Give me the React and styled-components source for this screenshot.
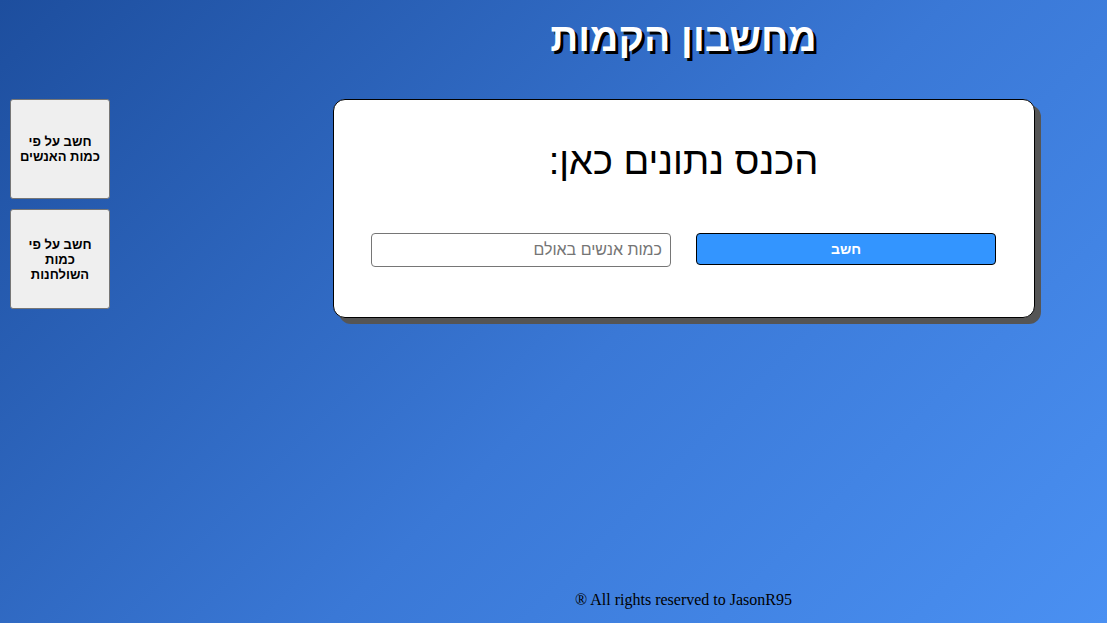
import React from 'react';
import styled, { createGlobalStyle } from 'styled-components';

const GlobalStyle = createGlobalStyle`
  html, body {
    margin: 0;
    padding: 0;
  }
  body {
    min-height: 100vh;
    background: linear-gradient(135deg, #1d4e9e 0%, #3a78d6 55%, #4a90f2 100%);
    font-family: "Liberation Sans", Arial, sans-serif;
  }
`;

const Page = styled.div`
  display: grid;
  grid-template-columns: 260px 1fr;
  min-height: 100vh;
`;

const Sidebar = styled.aside`
  display: flex;
  flex-direction: column;
  gap: 10px;
  padding: 99px 0 0 10px;
`;

const SideButton = styled.button`
  width: 100px;
  height: 100px;
  background: #efefef;
  border: 1px solid #767676;
  border-radius: 3px;
  font-family: "Liberation Sans", Arial, sans-serif;
  font-size: 13px;
  font-weight: bold;
  color: #000;
  direction: rtl;
  padding: 1px 6px;
  cursor: pointer;
`;

const Main = styled.main`
  display: flex;
  flex-direction: column;
  align-items: center;
`;

const Title = styled.h1`
  margin: 16px 0 0;
  height: 83px;
  font-size: 39px;
  font-weight: bold;
  color: #fff;
  text-shadow: 3px 3px 0 #000;
  direction: rtl;
`;

const Card = styled.section`
  width: 700px;
  box-sizing: content-box;
  background: #fff;
  border: 1px solid #000;
  border-radius: 12px;
  box-shadow: 6px 6px 0 #555;
  padding: 0 0 50px;
  display: flex;
  flex-direction: column;
  align-items: center;
`;

const CardTitle = styled.h2`
  margin: 40px 0 50px;
  font-size: 38px;
  font-weight: normal;
  direction: rtl;
  color: #000;
`;

const Row = styled.div`
  display: flex;
  direction: rtl;
  align-items: flex-start;
  gap: 25px;
`;

const SubmitButton = styled.button`
  width: 300px;
  height: 32px;
  background: #3395ff;
  color: #fff;
  border: 1px solid #000;
  border-radius: 4px;
  font-family: "Liberation Sans", Arial, sans-serif;
  font-size: 14px;
  font-weight: bold;
  cursor: pointer;
`;

const Field = styled.input`
  width: 300px;
  height: 34px;
  box-sizing: border-box;
  border: 1px solid #767676;
  border-radius: 4px;
  padding: 0 8px;
  font-family: "Liberation Sans", Arial, sans-serif;
  font-size: 16px;
  direction: rtl;
  &::placeholder {
    color: #757575;
  }
`;

const Footer = styled.footer`
  margin-top: auto;
  padding-bottom: 14px;
  font-family: "Liberation Serif", "Times New Roman", serif;
  font-size: 16px;
  color: #000;
`;

export default function App() {
  return (
    <>
      <GlobalStyle />
      <Page>
        <Sidebar>
          <SideButton>חשב על פי כמות האנשים</SideButton>
          <SideButton>חשב על פי כמות השולחנות</SideButton>
        </Sidebar>
        <Main>
          <Title>מחשבון הקמות</Title>
          <Card>
            <CardTitle>הכנס נתונים כאן:</CardTitle>
            <Row>
              <SubmitButton>חשב</SubmitButton>
              <Field type="number" placeholder="כמות אנשים באולם" />
            </Row>
          </Card>
          <Footer>® All rights reserved to JasonR95</Footer>
        </Main>
      </Page>
    </>
  );
}
